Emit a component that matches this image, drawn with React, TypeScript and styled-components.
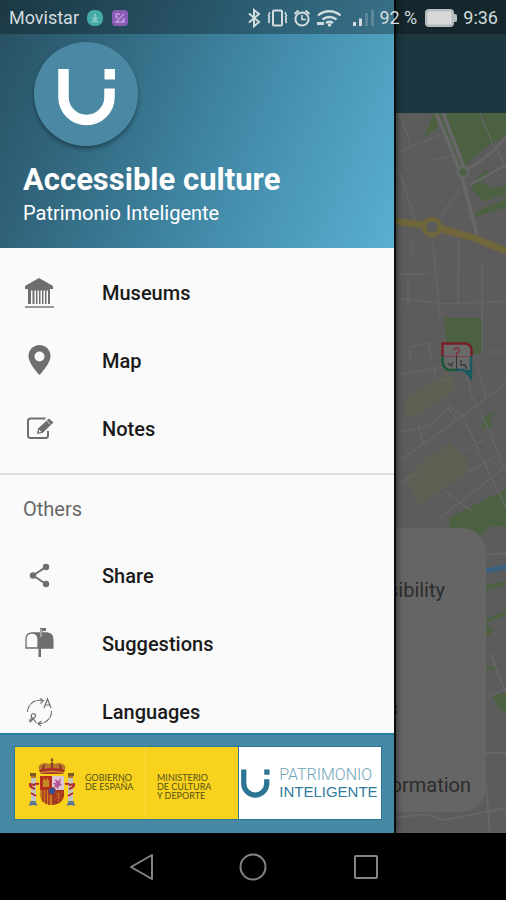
import React from "react";
import styled, { createGlobalStyle } from "styled-components";

const GlobalStyle = createGlobalStyle`
  *, *::before, *::after { box-sizing: border-box; }
  body { margin: 0; background: #000; font-family: Roboto, "Noto Sans", sans-serif; }
  button { padding: 0; border: 0; background: none; font: inherit; cursor: pointer; }
  a { color: inherit; text-decoration: none; }
  svg { display: block; }
`;

const Phone = styled.div`
  display: flex;
  flex-direction: column;
  height: 100vh;
  overflow: hidden;
`;

const Stage = styled.div`
  flex: 1;
  min-height: 0;
  display: grid;
  grid-template: minmax(0, 1fr) / minmax(0, 1fr);
  & > * { grid-area: 1 / 1; }
`;

/* Status bar */

const StatusBar = styled.header`
  z-index: 3;
  align-self: start;
  display: flex;
  align-items: center;
  justify-content: space-between;
  height: 34px;
  padding: 2px 8px 0 9px;
  background: rgba(0, 0, 0, 0.29);
  color: #d3dcdf;
  font-size: 18px;
  line-height: 24px;
`;

const StatusGroup = styled.div<{ $gap: number }>`
  display: flex;
  align-items: center;
  gap: ${(p) => p.$gap}px;
`;

const Indicators = styled(StatusGroup)`
  margin-right: 2px;
`;

/* Page behind the drawer */

const Page = styled.main`
  display: flex;
  flex-direction: column;
  min-height: 0;
`;

const AppBar = styled.div`
  flex: none;
  height: 113px;
  background: #1c373f;
`;

const MapArea = styled.section`
  flex: 1;
  min-height: 0;
  display: grid;
  grid-template: minmax(0, 1fr) / minmax(0, 1fr);
  background: #5c5c5c;
  & > * { grid-area: 1 / 1; }
`;

const MapDrawing = styled.svg`
  width: 100%;
  height: 100%;
`;

const InfoCard = styled.div`
  z-index: 1;
  align-self: end;
  margin: 0 20px 21px;
  padding: 48px 15px 13px;
  border-radius: 24px;
  background: #656565;
  color: #2d2d2d;
  font-size: 20px;
  line-height: 28px;
  text-align: right;
  display: flex;
  flex-direction: column;
`;

const CardLine = styled.span<{ $end: number; $after: number }>`
  padding-right: ${(p) => p.$end}px;
  margin-bottom: ${(p) => p.$after}px;
`;

/* Drawer */

const Drawer = styled.aside`
  z-index: 2;
  display: flex;
  flex-direction: column;
  min-height: 0;
  margin-right: 112px;
  background: #fafafa;
  box-shadow: 2px 0 0 #0b0d0e, 3px 0 6px rgba(0, 0, 0, 0.5);
`;

const Profile = styled.div`
  flex: none;
  padding: 42px 23px 20px;
  background: linear-gradient(112deg, #28505f 0%, #2f6278 20%, #4189a7 58%, #5aafd1 100%);
  color: #fff;
`;

const Avatar = styled.div`
  width: 104px;
  height: 104px;
  margin: 0 11px 16px;
  border-radius: 50%;
  background: #4a88a3;
  box-shadow: 0 3px 4px rgba(0, 0, 0, 0.35);
`;

const AppName = styled.h1`
  margin: 0;
  font-size: 31px;
  font-weight: 700;
  line-height: 36px;
`;

const AppOwner = styled.p`
  margin: 0;
  font-size: 20px;
  line-height: 30px;
`;

const Menu = styled.nav`
  flex: 1;
  min-height: 0;
  overflow: hidden;
  padding-top: 11px;
`;

const MenuItem = styled.a`
  display: flex;
  align-items: center;
  gap: 47px;
  height: 68px;
  padding: 0 23px;
  color: #1a1a1a;
  font-size: 20px;
  font-weight: 500;
  line-height: 24px;
  & > svg { flex: none; color: #6e6e6e; }
`;

const Divider = styled.hr`
  height: 2px;
  margin: 10px 0 20px;
  border: 0;
  background: #e0e0e0;
`;

const MenuHeading = styled.h2`
  margin: 0;
  padding: 0 23px 19px;
  color: #686868;
  font-size: 20px;
  font-weight: 400;
  line-height: 28px;
`;

const Sponsors = styled.footer`
  flex: none;
  display: flex;
  gap: 1px;
  height: 100px;
  padding: 12px 13px 14px 15px;
  border-top: 2px solid #24809f;
  background: #4788a4;
`;

const Sponsor = styled.div`
  display: flex;
  align-items: center;
  overflow: hidden;
  box-shadow: 0 0 0 1px #2b7898;
`;

const GovernmentSponsor = styled(Sponsor)`
  flex: 0 0 61%;
  gap: 8px;
  padding-left: 12px;
  background: #f8d21c;
`;

const HeritageSponsor = styled(Sponsor)`
  flex: 1;
  min-width: 0;
  padding-left: 2px;
  background: #fff;
`;

const Ministry = styled.p<{ $width: number }>`
  flex: none;
  align-self: flex-start;
  width: ${(p) => p.$width}px;
  margin: 26px 0 0;
  color: #57501a;
  font-family: Lato, sans-serif;
  font-size: 9px;
  line-height: 9px;
  white-space: pre-line;
`;

const Seam = styled.span`
  flex: none;
  align-self: stretch;
  width: 1px;
  margin-right: 3px;
  background: #fbdc45;
`;

const HeritageName = styled.p`
  margin: 0 0 0 9px;
  color: #2f7d9c;
  font-family: "Liberation Sans", Arial, sans-serif;
  font-size: 15px;
  line-height: 17px;
  white-space: nowrap;
`;

const LightWord = styled.span`
  display: block;
  color: #6fa5ba;
  font-family: Roboto, sans-serif;
  font-size: 16px;
  font-weight: 300;
`;

/* System navigation */

const SystemNav = styled.nav`
  flex: none;
  display: flex;
  align-items: center;
  justify-content: center;
  gap: 80px;
  height: 67px;
  background: #000;
  color: #858585;
`;

const StatusIcons = () => (
  <svg width="127" height="24" viewBox="0 0 127 24" fill="none" stroke="currentColor" strokeWidth="2" aria-hidden="true">
    <path d="M1 7.500l10 8.500-5 4.200V4L11 8 1 16.500" strokeWidth="2" />
    <rect x="25" y="4.500" width="9" height="15" rx="1" />
    <path d="M21.500 6v2l-1 1.500 1 1.500-1 1.500 1 1.500-1 1.500 1 1.500M37.500 6v2l1 1.500-1 1.500 1 1.500-1 1.500 1 1.500-1 1.500" strokeWidth="1.500" />
    <circle cx="54" cy="13" r="6.600" />
    <path d="M54 9v4.500h4" strokeWidth="1.600" />
    <path d="M46.500 8l4-3.500M61.500 8l-4-3.500" />
    <path d="M70 9.500a17 17 0 0 1 22.500 0M74.500 13.500a11 11 0 0 1 14 0M78 17a6 6 0 0 1 7 0" strokeWidth="2.300" />
    <circle cx="81.500" cy="19" r="1.800" fill="currentColor" stroke="none" />
    <path d="M69 17.500h7" strokeWidth="3" />
    <path d="M106.500 20v-4M112.500 20v-7.500" strokeWidth="3" />
    <path d="M118.500 20V7M124.500 20V4" strokeWidth="2.500" opacity=".3" />
  </svg>
);

const Battery = () => (
  <svg width="34" height="20" viewBox="0 0 34 20" aria-hidden="true">
    <rect x="1" y="1" width="29" height="18" rx="4" fill="#b7bbbd" />
    <rect x="3.500" y="3.500" width="24" height="13" rx="1.500" fill="#d8d8d8" />
    <path d="M30 6h1.500q1.500 0 1.500 1.500v5q0 1.500-1.500 1.500H30z" fill="#b7bbbd" />
  </svg>
);

const DownloadBadge = () => (
  <svg width="18" height="18" viewBox="0 0 18 18" aria-hidden="true">
    <rect x="1" y="1" width="16" height="16" rx="7" fill="#43aaa8" />
    <path d="M9 4.500v6M6.500 8.500L9 11l2.500-2.500M5.500 12.500h7" fill="none" stroke="#8bd0ce" strokeWidth="1.300" />
  </svg>
);

const PhotoBadge = () => (
  <svg width="18" height="18" viewBox="0 0 18 18" aria-hidden="true">
    <rect x="1" y="1" width="16" height="16" rx="4" fill="#8a5cb5" />
    <path d="M5 9V5h4M13 9v4H5l8-8M5 7l2 2M11 13l2-3" fill="none" stroke="#c39be0" strokeWidth="1.300" />
  </svg>
);

const SmileMark = ({ size, color, viewBox }: { size: number; color: string; viewBox: string }) => (
  <svg width={size} height={size} viewBox={viewBox} aria-hidden="true">
    <path d="M29.500 27v28a23 23 0 0 0 46 0v-8.500" fill="none" stroke={color} strokeWidth="10.500" />
    <rect x="70.500" y="27" width="10.500" height="10.500" fill={color} />
  </svg>
);

const CityMap = () => (
  <MapDrawing viewBox="0 0 506 720" preserveAspectRatio="xMaxYMin slice" role="img" aria-label="City map">
    <g fill="#4b6142">
      <path d="M433 0h73v22l-15 9-12 9-18 16-6-8-8-22L440 8l-4 8-12 8 6-14z" />
      <path d="M472 71l13-14 5 2-8 10 9 6 15-2v10l-10 1-11 5-14-14z" />
      <path d="M475 99l31-13v8l-31 10z" />
      <path d="M444 205h38v36h-35z" />
      <path d="M449 405l57-29v38l-14-2-12 11 7 14-14-14-22-2z" />
      <path d="M481 304l14-6-5 9 2 6-9 3-2-4 5-4z" />
      <path d="M493 583l13-4v21q-9-3-13-17z" />
      <path d="M486 472l20-4v4l-20 5zM486 506l20-8v4l-20 8zM486 554l12-1v3l-12 2zM486 512l7 3-3 7-4 1z" />
    </g>
    <g fill="#62604f">
      <path d="M406 285l40-24 8 4v13l-38 26h-12z" opacity=".6" />
      <path d="M430 342l20-12 18 18-4 14-32 22-12 9-16-28z" opacity=".6" />
    </g>
    <g fill="none" stroke="#676767">
      <path d="M436 0l12 28 14 36 15 58M443 0l20 52 4 10" strokeWidth="4" />
      <circle cx="463" cy="59" r="5" strokeWidth="2.500" fill="#4b6142" />
      <path d="M467 57l24-17 15-16M470 72l36-20" strokeWidth="2.500" />
      <path d="M480 0l14 34M394 41l46-19M399 57l17 52M399 0l11 28M433 47l18-4M461 79q-14 10-19 26M433 130l7 74M459 126l-1 65M396 185l50 6 60-3M412 126v18M396 161h34M482 150v58M408 165v28M496 34l10 22" strokeWidth="1.200" />
      <path d="M482 197v42h24M396 262l60-10M394 351l44-30 48-36 20-15M446 289l18 16 16 36 26 54M448 295l10 12M464 250l8 34 8 12 14 34 12 30M476 250l10 34M418 311l6 22M410 250v-16l18-4 4 18M436 252l-2 12 16 4M396 320l34-8 18-16M460 340l26-14M466 360l28-16M440 405l66-52M396 372l24-14M444 378l28 20" strokeWidth="1.200" />
      <path d="M486 442l20-2M490 540l16 40M488 584l18-8M394 705l30-4 20 6 62-12M486 640h20M486 672l4 48" strokeWidth="1.800" />
    </g>
    <g fill="none" stroke="#71653c">
      <path d="M394 108l29 4" strokeWidth="7" />
      <circle cx="432" cy="114" r="8" strokeWidth="4.500" />
      <path d="M441 116l30 8 35 14" strokeWidth="7" />
    </g>
    <path d="M486 458l20-4" stroke="#3c607f" strokeWidth="5" />
    <g>
      <path d="M441 230h27q4 2 4 7v27l-8-6h-16q-7-2-7-9z" fill="#696969" />
      <path d="M442.500 243v-12.500h23q6 1 6 7V243" fill="none" stroke="#781f28" strokeWidth="2.500" />
      <path d="M442.500 243v5q1 9 8 9h6" fill="none" stroke="#1c5738" strokeWidth="2.500" />
      <path d="M456 257h8l7 6v-20" fill="none" stroke="#1b5960" strokeWidth="2.500" />
      <path d="M463 257h9v11z" fill="#1b5960" />
      <path d="M444 243.500h26" stroke="#814045" />
      <path d="M456.500 243v13" stroke="#3b3032" />
      <path d="M454 237.500a2.500 2.500 0 1 1 2.500 2.500v3" fill="none" stroke="#7c2f38" strokeWidth="1.400" />
      <path d="M448 250l3 3 2-4M461 247v5h4l2 4" fill="none" stroke="#3b3a3a" strokeWidth="1.400" />
    </g>
  </MapDrawing>
);

const MuseumIcon = () => (
  <svg width="32" height="32" viewBox="0 0 32 32" fill="currentColor" aria-hidden="true">
    <path d="M16 1l14 8v3H2V9z" />
    <path d="M5 12h22v1.500H5zM5 13h3v14H5zM9.500 13h2v14h-2zM13 13h1.500v14H13zM16 13h1.500v14H16zM19 13h1.500v14H19zM22 13h1.500v14H22zM25 13h2v14h-2z" />
    <path d="M2 29h29v2H2z" opacity=".7" />
  </svg>
);

const PinIcon = () => (
  <svg width="32" height="32" viewBox="0 0 32 32" fill="currentColor" aria-hidden="true">
    <path fillRule="evenodd" d="M16.500 0C10 0 5.500 5 5.500 11c0 8 11 19 11 19s11-11 11-19c0-6-4.500-11-11-11zm0 6.500a5 5 0 1 1 0 10 5 5 0 0 1 0-10z" />
  </svg>
);

const NoteIcon = () => (
  <svg width="32" height="32" viewBox="0 0 32 32" fill="none" stroke="currentColor" strokeWidth="2" aria-hidden="true">
    <path d="M22.500 5.500H7.500Q5 5.500 5 8v14.500Q5 25 7.500 25h15q2.500 0 2.500-2.500V18" />
    <path d="M15 15.500L26 5.500l4.500 4-11 10.500-5.500 1z" fill="currentColor" stroke="none" />
    <path d="M16 16.500l2.500 2.500-2.500.5z" fill="#fafafa" stroke="none" />
    <path d="M23.500 7.500l4 4" stroke="#fafafa" strokeWidth=".7" />
  </svg>
);

const ShareIcon = () => (
  <svg width="32" height="32" viewBox="0 0 32 32" fill="currentColor" aria-hidden="true">
    <path d="M23 7L10 15.500 23 24" fill="none" stroke="currentColor" strokeWidth="2" />
    <circle cx="23" cy="7" r="3.200" />
    <circle cx="10" cy="15.500" r="3.200" />
    <circle cx="23" cy="24" r="3.200" />
  </svg>
);

const MailboxIcon = () => (
  <svg width="32" height="32" viewBox="0 0 32 32" fill="currentColor" aria-hidden="true">
    <path d="M3 20V10.500Q3.500 5 9 5t6 5.500V20z" fill="none" stroke="currentColor" strokeWidth="1.300" />
    <path d="M9 4.300h8V0h6v3h-3.500v1.300H24q6.500.7 6.500 7V20.700H15V11q0-5-6-6.700z" />
    <path d="M18 1v8" stroke="#fafafa" strokeWidth=".8" />
    <path d="M15.500 20h2.500v9h-2.500z" />
  </svg>
);

const LanguageIcon = () => (
  <svg width="32" height="32" viewBox="0 0 32 32" fill="none" stroke="currentColor" strokeWidth="1.100" aria-hidden="true">
    <path d="M4.500 16A12 12 0 0 1 19 4.500M28.500 15A12 12 0 0 1 16 27.500" strokeDasharray="7 .8" />
    <path d="M17 2.500l3.500 2-3 3M18.500 25L15 27.500l3 2.500" />
    <path d="M21 12l3.500-9L28 12M22 9h5" strokeWidth="1.200" />
    <path d="M7 26l5-5q1.500-2-.5-3t-3 1 1 3l4 5M7 26q-1-3 2-3.500" strokeWidth="1.200" />
  </svg>
);

const CoatOfArms = () => (
  <svg width="50" height="52" viewBox="0 0 50 52" aria-label="Escudo de España" role="img">
    <path d="M25 1v5M23.500 3h3" stroke="#6b4b22" strokeWidth="1.200" />
    <path d="M14 15q-5-5 0-8 4-2 8 0 3-3 6 0 4-2 8 0 5 3 0 8z" fill="#b9762a" />
    <path d="M17 14q-2-4 1-6M25 14V6M33 14q2-4-1-6" fill="none" stroke="#7c2b25" strokeWidth="1.500" />
    <path d="M12 13q13-4 26 0l-2 4H14z" fill="#a92d28" />
    <path d="M13 16q12-3 24 0" fill="none" stroke="#c99a2e" strokeWidth="1.500" />
    <path d="M13 19h24v19q-1 9-12 10-11-1-12-10z" fill="#a23a20" />
    <path d="M13 19h12v14H13z" fill="#b5301f" />
    <path d="M16 23h6v7h-6zM17 21h1v2h-1zM20 21h1v2h-1z" fill="#c88a25" />
    <path d="M25 19h12v14H25z" fill="#dcc5d2" />
    <path d="M28 22l3 2 3-3-1 5 2 2-3 1-1 3-2-2-2 1 1-3-2-2h3z" fill="#b8579a" />
    <path d="M13 33h12v15q-11-1-12-10z" fill="#c9801f" />
    <path d="M16 33v12M19 33v14M22 33v15" stroke="#a8321f" strokeWidth="1.600" />
    <path d="M25 33h12v5q-1 9-12 10z" fill="#a63a1f" />
    <path d="M28 35l7 8M35 35l-7 8M31.500 35v10" stroke="#c96b24" strokeWidth=".8" />
    <circle cx="25" cy="34" r="3.500" fill="#31539a" stroke="#a8322a" />
    <path d="M4 20h5v24H4zM41 20h5v24h-5z" fill="#c3c6bd" />
    <path d="M3 16h6v3H3zM41 16h6v3h-6z" fill="#7c5a24" />
    <path d="M4 19h5v2H4zM41 19h5v2h-5z" fill="#b9762a" />
    <path d="M3 44h6v3H3zM41 44h6v3h-6z" fill="#6d7d84" />
    <path d="M2 48q4-2 8 0M40 48q4-2 8 0" stroke="#51729b" strokeWidth="1.800" fill="none" />
    <path d="M12 27q-4-1-5 1l-4-1q-1 3 5 5M38 27q4-1 5 1l4-1q1 3-5 5M4 36l5 3M46 36l-5 3" fill="none" stroke="#b52d2b" strokeWidth="2" />
  </svg>
);

const mainItems = [
  { label: "Museums", Icon: MuseumIcon },
  { label: "Map", Icon: PinIcon },
  { label: "Notes", Icon: NoteIcon },
];

const otherItems = [
  { label: "Share", Icon: ShareIcon },
  { label: "Suggestions", Icon: MailboxIcon },
  { label: "Languages", Icon: LanguageIcon },
];

const MenuItems = ({ items }: { items: typeof mainItems }) => (
  <>
    {items.map(({ label, Icon }) => (
      <MenuItem key={label} href={`#${label.toLowerCase()}`}>
        <Icon />
        {label}
      </MenuItem>
    ))}
  </>
);

export default function App() {
  return (
    <Phone>
      <GlobalStyle />
      <Stage>
        <StatusBar>
          <StatusGroup $gap={7}>
            <span>Movistar</span>
            <DownloadBadge />
            <PhotoBadge />
          </StatusGroup>
          <StatusGroup $gap={5}>
            <Indicators $gap={4}>
              <StatusIcons />
              <span>92 %</span>
            </Indicators>
            <Battery />
            <span>9:36</span>
          </StatusGroup>
        </StatusBar>

        <Page>
          <AppBar />
          <MapArea>
            <CityMap />
            <InfoCard>
              <CardLine $end={26} $after={90}>Accessibility</CardLine>
              <CardLine $end={73} $after={49}>Services</CardLine>
              <CardLine $end={0} $after={0}>Information</CardLine>
            </InfoCard>
          </MapArea>
        </Page>

        <Drawer>
          <Profile>
            <Avatar>
              <SmileMark size={104} color="#fff" viewBox="0 0 104 104" />
            </Avatar>
            <AppName>Accessible culture</AppName>
            <AppOwner>Patrimonio Inteligente</AppOwner>
          </Profile>
          <Menu aria-label="Main menu">
            <MenuItems items={mainItems} />
            <Divider />
            <MenuHeading>Others</MenuHeading>
            <MenuItems items={otherItems} />
          </Menu>
          <Sponsors>
            <GovernmentSponsor>
              <CoatOfArms />
              <Ministry $width={52}>{"GOBIERNO\nDE ESPAÑA"}</Ministry>
              <Seam />
              <Ministry $width={60}>{"MINISTERIO\nDE CULTURA\nY DEPORTE"}</Ministry>
            </GovernmentSponsor>
            <HeritageSponsor>
              <SmileMark size={29} color="#2a7593" viewBox="24 26 58 58" />
              <HeritageName>
                <LightWord>PATRIMONIO</LightWord>
                INTELIGENTE
              </HeritageName>
            </HeritageSponsor>
          </Sponsors>
        </Drawer>
      </Stage>

      <SystemNav aria-label="System navigation">
        <button type="button" aria-label="Back">
          <svg width="32" height="32" viewBox="0 0 32 32" fill="none" stroke="#858585" strokeWidth="2" strokeLinejoin="round">
            <path d="M6 16L27 4v24z" />
          </svg>
        </button>
        <button type="button" aria-label="Home">
          <svg width="32" height="32" viewBox="0 0 32 32" fill="none" stroke="#858585" strokeWidth="2">
            <circle cx="16" cy="16" r="12.500" />
          </svg>
        </button>
        <button type="button" aria-label="Recent apps">
          <svg width="32" height="32" viewBox="0 0 32 32" fill="none" stroke="#858585" strokeWidth="2">
            <rect x="6" y="5" width="22" height="22" rx="1" />
          </svg>
        </button>
      </SystemNav>
    </Phone>
  );
}
